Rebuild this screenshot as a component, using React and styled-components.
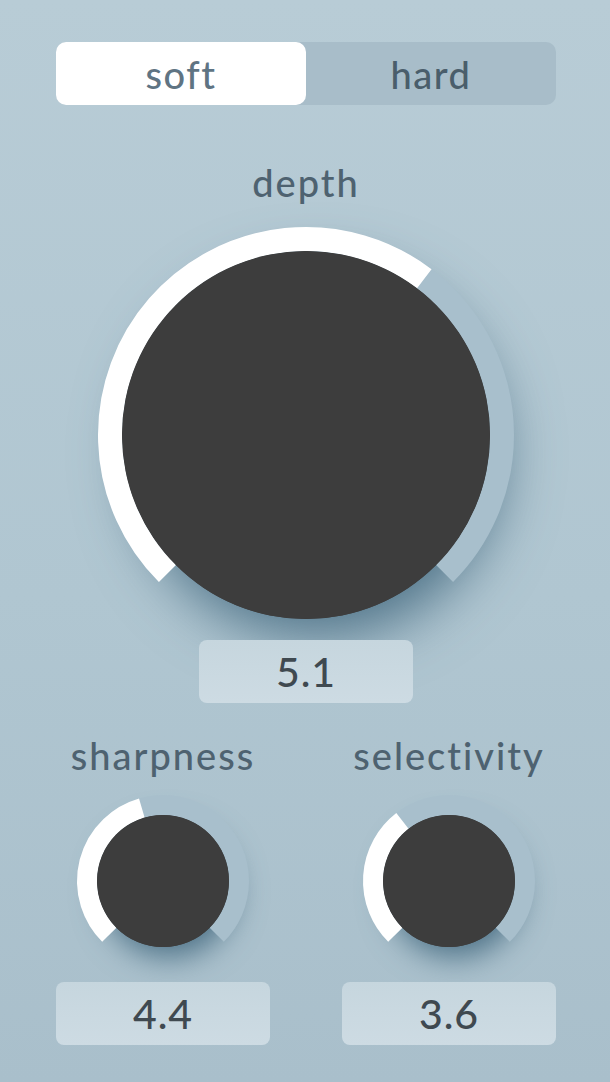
import React from "react";
import styled, { createGlobalStyle } from "styled-components";

const GlobalStyle = createGlobalStyle`
  html, body {
    margin: 0;
    padding: 0;
  }
  body {
    font-family: Lato, "Noto Sans", sans-serif;
    font-weight: 500;
  }
`;

const Panel = styled.main`
  width: 610px;
  height: 1082px;
  box-sizing: border-box;
  padding: 42px 54px 0 56px;
  display: flex;
  flex-direction: column;
  align-items: stretch;
  overflow: hidden;
  background: linear-gradient(180deg, #b8ccd6 0%, #b0c6d1 55%, #a9bfcb 100%);
`;

const Toggle = styled.div`
  display: grid;
  grid-template-columns: 1fr 1fr;
  height: 63px;
  border-radius: 10px;
  background: #a8bdc9;
`;

const ToggleOption = styled.button`
  border: none;
  margin: 0;
  padding: 0;
  border-radius: 10px;
  font-family: inherit;
  font-weight: inherit;
  font-size: 38px;
  letter-spacing: 1.5px;
  background: ${(p) => (p.$active ? "#ffffff" : "transparent")};
  color: ${(p) => (p.$active ? "#5f7483" : "#4a5e6b")};
  cursor: pointer;
`;

const Block = styled.section`
  display: flex;
  flex-direction: column;
  align-items: center;
  margin-top: ${(p) => p.$top}px;
`;

const Label = styled.div`
  font-size: 38px;
  line-height: 40px;
  letter-spacing: 2px;
  color: #4e6270;
  transform: translateY(-2px);
`;

const Dial = styled.svg`
  display: block;
  overflow: visible;
  margin-top: ${(p) => p.$gap}px;
`;

// dark disc under the ring, only there to cast the soft shadow
const Shade = styled.circle`
  fill: #3d3d3d;
  filter: drop-shadow(${(p) => p.$d}px ${(p) => p.$d * 1.7}px ${(p) => p.$d * 2.6}px rgba(52, 92, 116, 0.8));
`;

const Cap = styled.circle`
  fill: #3d3d3d;
`;

const ValueBox = styled.div`
  width: 214px;
  height: 63px;
  margin-top: ${(p) => p.$gap}px;
  border-radius: 8px;
  background: linear-gradient(180deg, #c6d6de 0%, #cddbe3 100%);
  display: flex;
  align-items: center;
  justify-content: center;
  font-size: 41px;
  letter-spacing: 1px;
  color: #3f4950;
`;

const Row = styled.div`
  display: flex;
  justify-content: space-between;
  margin-top: 34px;
`;

const point = (c, r, deg) => {
  const a = (deg * Math.PI) / 180;
  return [c + r * Math.sin(a), c - r * Math.cos(a)];
};

const arc = (c, r, from, to) => {
  const [x1, y1] = point(c, r, from);
  const [x2, y2] = point(c, r, to);
  const large = to - from > 180 ? 1 : 0;
  return `M ${x1} ${y1} A ${r} ${r} 0 ${large} 1 ${x2} ${y2}`;
};

function Knob({ label, value, max, cap, ring, labelGap, boxGap, top }) {
  const outer = cap + ring;
  const mid = cap + ring / 2;
  const angle = -135 + (270 * value) / max;
  return (
    <Block $top={top}>
      <Label>{label}</Label>
      <Dial
        $gap={labelGap}
        width={outer * 2}
        height={outer + cap}
        viewBox={`0 0 ${outer * 2} ${outer + cap}`}
      >
        <Shade cx={outer} cy={outer} r={cap} $d={cap > 100 ? 11 : 6} />
        <path d={arc(outer, mid, -135, 135)} fill="none" stroke="#a8bfcc" strokeWidth={ring} />
        <path d={arc(outer, mid, -135, angle)} fill="none" stroke="#ffffff" strokeWidth={ring} />
        <Cap cx={outer} cy={outer} r={cap} />
      </Dial>
      <ValueBox $gap={boxGap}>{value.toFixed(1)}</ValueBox>
    </Block>
  );
}

export default function App() {
  const [mode, setMode] = React.useState("soft");
  return (
    <>
      <GlobalStyle />
      <Panel>
        <Toggle>
          {["soft", "hard"].map((m) => (
            <ToggleOption key={m} $active={mode === m} onClick={() => setMode(m)}>
              {m}
            </ToggleOption>
          ))}
        </Toggle>
        <Knob label="depth" value={5.1} max={8} cap={184} ring={24} labelGap={23} boxGap={21} top={59} />
        <Row>
          <Knob label="sharpness" value={4.4} max={10} cap={66} ring={20} labelGap={18} boxGap={35} top={0} />
          <Knob label="selectivity" value={3.6} max={10} cap={66} ring={20} labelGap={18} boxGap={35} top={0} />
        </Row>
      </Panel>
    </>
  );
}
